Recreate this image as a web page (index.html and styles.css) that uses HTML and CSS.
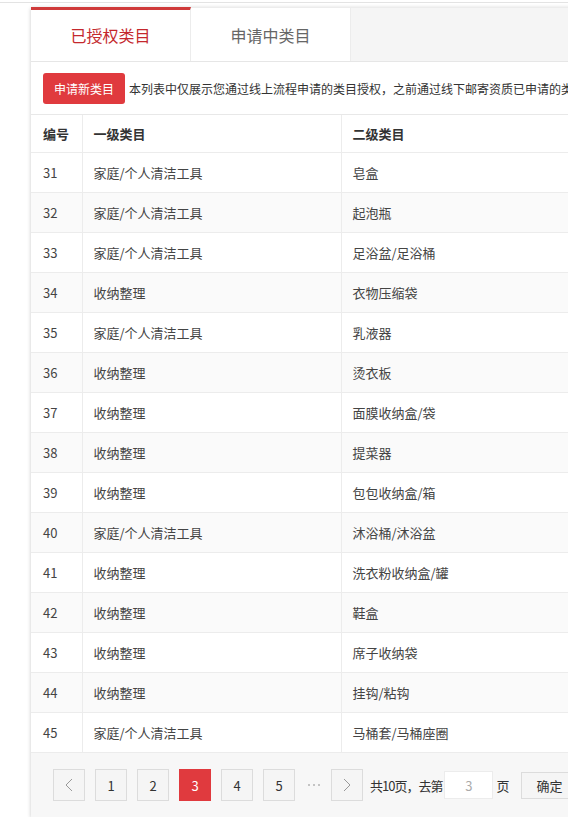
FILE: index.html
```html
<!DOCTYPE html>
<html lang="zh-CN">
<head>
<meta charset="utf-8">
<title>已授权类目</title>
<link rel="stylesheet" href="styles.css">
</head>
<body>
<div class="topline"></div>
<div class="page">
  <div class="card">
    <div class="tabbar">
      <div class="tab tab-active">已授权类目</div>
      <div class="tab">申请中类目</div>
      <div class="tab-rest"></div>
    </div>
    <div class="toolbar">
      <button class="btn-apply">申请新类目</button>
      <span class="desc">本列表中仅展示您通过线上流程申请的类目授权，之前通过线下邮寄资质已申请的类目不在此列表中展示</span>
    </div>
    <table class="grid">
      <colgroup><col class="c1"><col class="c2"><col class="c3"></colgroup>
      <thead>
        <tr><th>编号</th><th>一级类目</th><th>二级类目</th></tr>
      </thead>
      <tbody>
        <tr><td>31</td><td>家庭/个人清洁工具</td><td>皂盒</td></tr>
        <tr><td>32</td><td>家庭/个人清洁工具</td><td>起泡瓶</td></tr>
        <tr><td>33</td><td>家庭/个人清洁工具</td><td>足浴盆/足浴桶</td></tr>
        <tr><td>34</td><td>收纳整理</td><td>衣物压缩袋</td></tr>
        <tr><td>35</td><td>家庭/个人清洁工具</td><td>乳液器</td></tr>
        <tr><td>36</td><td>收纳整理</td><td>烫衣板</td></tr>
        <tr><td>37</td><td>收纳整理</td><td>面膜收纳盒/袋</td></tr>
        <tr><td>38</td><td>收纳整理</td><td>提菜器</td></tr>
        <tr><td>39</td><td>收纳整理</td><td>包包收纳盒/箱</td></tr>
        <tr><td>40</td><td>家庭/个人清洁工具</td><td>沐浴桶/沐浴盆</td></tr>
        <tr><td>41</td><td>收纳整理</td><td>洗衣粉收纳盒/罐</td></tr>
        <tr><td>42</td><td>收纳整理</td><td>鞋盒</td></tr>
        <tr><td>43</td><td>收纳整理</td><td>席子收纳袋</td></tr>
        <tr><td>44</td><td>收纳整理</td><td>挂钩/粘钩</td></tr>
        <tr><td>45</td><td>家庭/个人清洁工具</td><td>马桶套/马桶座圈</td></tr>
      </tbody>
    </table>
    <div class="pager">
      <a class="pg"><svg width="8" height="14" viewBox="0 0 8 14"><polyline points="7,1 1,7 7,13" fill="none" stroke="#999" stroke-width="1"/></svg></a>
      <a class="pg">1</a>
      <a class="pg">2</a>
      <a class="pg pg-on">3</a>
      <a class="pg">4</a>
      <a class="pg">5</a>
      <span class="dots"><i></i><i></i><i></i></span>
      <a class="pg"><svg width="8" height="14" viewBox="0 0 8 14"><polyline points="1,1 7,7 1,13" fill="none" stroke="#999" stroke-width="1"/></svg></a>
      <span class="total">共10页，去第</span>
      <span class="goto">3</span>
      <span class="unit">页</span>
      <a class="ok">确定</a>
    </div>
  </div>
</div>
</body>
</html>
```

FILE: styles.css
```css
html, body {
  margin: 0;
  padding: 0;
  background: #fff;
  overflow: hidden;
  font-family: "Noto Sans CJK SC", "Microsoft YaHei", sans-serif;
  color: #333;
}

.topline {
  height: 2px;
  border-bottom: 1px solid #e3e3e3;
}

.page {
  padding: 4px 0 0 31px;
}

.card {
  width: 660px;
  background: #fff;
  box-shadow: 0 1px 4px rgba(0, 0, 0, 0.22);
}

.tabbar {
  display: flex;
  height: 54px;
  background: #f5f5f5;
  border-bottom: 1px solid #e6e6e6;
}

.tab {
  width: 160px;
  box-sizing: border-box;
  background: #fff;
  border-top: 1px solid #ececec;
  border-right: 1px solid #ececec;
  display: flex;
  align-items: center;
  justify-content: center;
  font-size: 16px;
  color: #666;
}

.tab-active {
  border-top: 3px solid #cf3a3a;
  color: #c4282d;
  padding-bottom: 2px;
}

.tab-rest {
  flex: 1;
  border-top: 1px solid #ececec;
}

.toolbar {
  display: flex;
  align-items: center;
  gap: 4px;
  padding: 11px 12px 10px;
  border-bottom: 1px solid #e8e8e8;
  white-space: nowrap;
  overflow: hidden;
}

.btn-apply {
  flex: none;
  width: 82px;
  height: 31px;
  border: 0;
  border-radius: 3px;
  background: #e03a3e;
  color: #fff;
  font-family: inherit;
  font-size: 12px;
  padding: 0;
}

.desc {
  font-size: 12px;
  color: #333;
}

.grid {
  width: 100%;
  border-collapse: collapse;
  table-layout: fixed;
  font-size: 13px;
}

.c1 { width: 51px; }
.c2 { width: 259px; }

.grid th,
.grid td {
  text-align: left;
  padding: 0 11px;
  border-bottom: 1px solid #ececec;
  border-right: 1px solid #ececec;
  white-space: nowrap;
}

.grid th:first-child,
.grid td:first-child {
  padding-left: 12px;
}

.grid th {
  height: 37px;
  font-weight: 600;
  color: #333;
}

.grid td {
  height: 39px;
  color: #444;
}

.grid tbody tr:nth-child(even) td {
  background: #fafafa;
}

.pager {
  display: flex;
  align-items: center;
  height: 64px;
  padding-left: 22px;
  background: #f7f7f7;
  font-size: 13px;
}

.pg {
  flex: none;
  width: 32px;
  height: 32px;
  box-sizing: border-box;
  margin-right: 10px;
  border: 1px solid #dcdcdc;
  background: #f5f5f5;
  color: #333;
  display: flex;
  align-items: center;
  justify-content: center;
}

.pg-on {
  background: #e03a3e;
  border-color: #e03a3e;
  color: #fff;
}

.dots {
  width: 18px;
  margin-right: 8px;
  display: flex;
  justify-content: center;
  gap: 3px;
}

.dots i {
  width: 2px;
  height: 2px;
  background: #c4c4c4;
}

.total {
  margin-left: -3px;
  letter-spacing: -1px;
  color: #333;
}

.goto {
  width: 49px;
  height: 28px;
  box-sizing: border-box;
  margin-left: 2px;
  border: 1px solid #ececec;
  background: #fff;
  color: #aaa;
  display: flex;
  align-items: center;
  justify-content: center;
}

.unit {
  margin-left: 3px;
  margin-right: 12px;
}

.ok {
  width: 56px;
  height: 27px;
  box-sizing: border-box;
  border: 1px solid #dcdcdc;
  background: #f5f5f5;
  display: flex;
  align-items: center;
  justify-content: center;
  color: #333;
}
```
